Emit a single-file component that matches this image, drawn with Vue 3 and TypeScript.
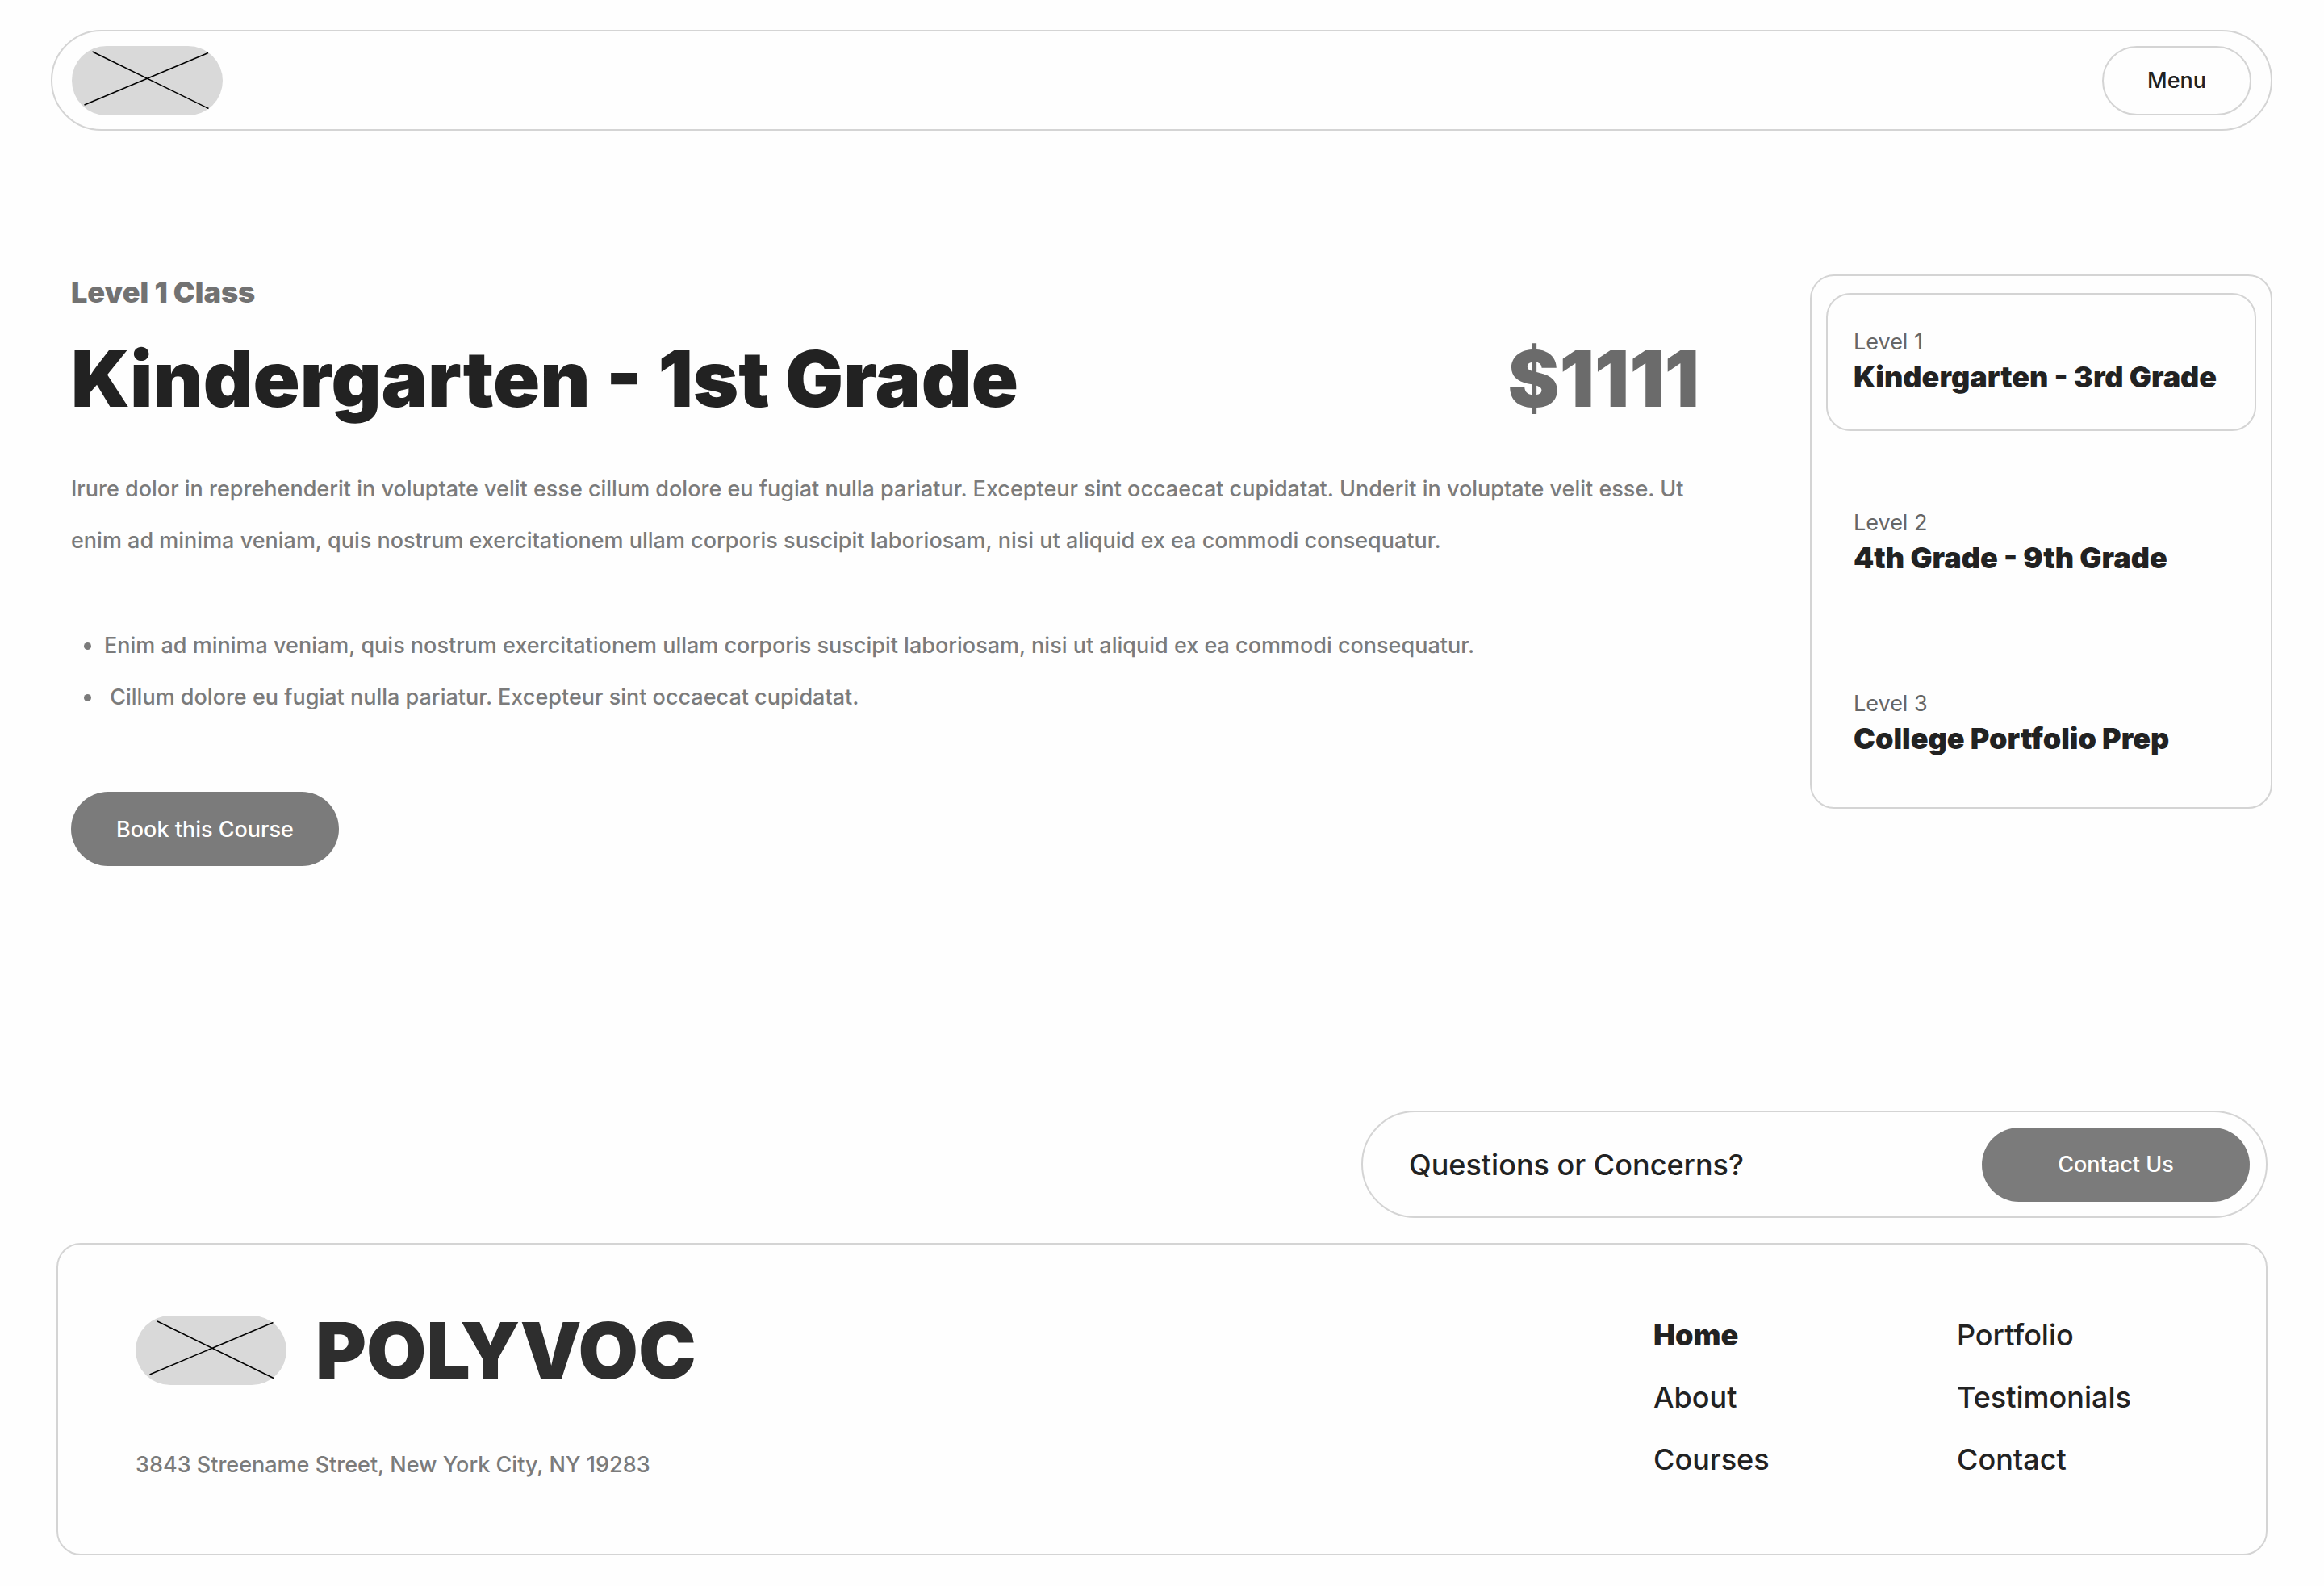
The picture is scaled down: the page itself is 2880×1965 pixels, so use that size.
<script setup lang="ts">
interface Level {
  label: string
  title: string
  active: boolean
}

interface FooterLink {
  text: string
  current: boolean
}

const levels: Level[] = [
  { label: 'Level 1', title: 'Kindergarten - 3rd Grade', active: true },
  { label: 'Level 2', title: '4th Grade - 9th Grade', active: false },
  { label: 'Level 3', title: 'College Portfolio Prep', active: false },
]

const footerColumns: FooterLink[][] = [
  [
    { text: 'Home', current: true },
    { text: 'About', current: false },
    { text: 'Courses', current: false },
  ],
  [
    { text: 'Portfolio', current: false },
    { text: 'Testimonials', current: false },
    { text: 'Contact', current: false },
  ],
]
</script>

<template>
  <div class="page">
    <header class="topbar">
      <a href="#" class="logo" aria-label="Polyvoc home">
        <svg width="187" height="86" viewBox="0 0 187 86" fill="none">
          <rect width="187" height="86" rx="43" fill="#d9d9d9" />
          <path d="M25.500 7L169.500 77.500M15.500 73L169 8.500" stroke="#000" stroke-width="1.500" />
        </svg>
      </a>
      <button type="button" class="menu">Menu</button>
    </header>

    <main class="content">
      <article class="course">
        <p class="eyebrow">Level 1 Class</p>
        <div class="title-row">
          <h1>Kindergarten - 1st Grade</h1>
          <span class="price">$1111</span>
        </div>
        <p class="body">
          Irure dolor in reprehenderit in voluptate velit esse cillum dolore eu fugiat nulla pariatur. Excepteur sint occaecat cupidatat. Underit in voluptate velit esse. Ut enim ad minima veniam, quis nostrum exercitationem ullam corporis suscipit laboriosam, nisi ut aliquid ex ea commodi consequatur.
        </p>
        <ul class="points">
          <li>Enim ad minima veniam, quis nostrum exercitationem ullam corporis suscipit laboriosam, nisi ut aliquid ex ea commodi consequatur.</li>
          <li>&nbsp;Cillum dolore eu fugiat nulla pariatur. Excepteur sint occaecat cupidatat.</li>
        </ul>
        <button type="button" class="pill">Book this Course</button>
      </article>

      <nav class="levels" aria-label="Levels">
        <a
          v-for="level in levels"
          :key="level.label"
          href="#"
          class="level"
          :class="{ active: level.active }"
        >
          <span class="level-label">{{ level.label }}</span>
          <span class="level-title">{{ level.title }}</span>
        </a>
      </nav>
    </main>

    <section class="cta">
      <h2>Questions or Concerns?</h2>
      <button type="button" class="pill">Contact Us</button>
    </section>

    <footer class="footer">
      <div class="brand">
        <div class="brand-row">
          <svg width="187" height="86" viewBox="0 0 187 86" fill="none" aria-hidden="true">
            <rect width="187" height="86" rx="43" fill="#d9d9d9" />
            <path d="M27 7L171 77.500M17.500 73L170.500 8.500" stroke="#000" stroke-width="1.500" />
          </svg>
          <span class="brand-name">POLYVOC</span>
        </div>
        <address>3843 Streename Street, New York City, NY 19283</address>
      </div>
      <nav class="links" aria-label="Footer">
        <ul v-for="(column, i) in footerColumns" :key="i">
          <li v-for="link in column" :key="link.text">
            <a href="#" :class="{ current: link.current }">{{ link.text }}</a>
          </li>
        </ul>
      </nav>
    </footer>
  </div>
</template>

<style>
body {
  background: #fefefe;
}
</style>

<style scoped>
.page {
  box-sizing: border-box;
  padding: 37px 64px 37px 63px;
  font-family: Inter, "Liberation Sans", sans-serif;
  font-size: 27px;
  font-weight: 500;
  color: #222;
}

.page *,
.page *::before {
  box-sizing: border-box;
}

h1,
h2,
p,
ul {
  margin: 0;
  padding: 0;
  list-style: none;
}

a {
  color: inherit;
  text-decoration: none;
}

button {
  font: inherit;
  cursor: pointer;
}

svg {
  display: block;
  flex: none;
}

.topbar {
  display: flex;
  align-items: center;
  justify-content: space-between;
  height: 125px;
  padding: 0 24px;
  border: 2px solid #d4d4d4;
  border-radius: 63px;
}

.menu {
  width: 185px;
  height: 86px;
  border: 2px solid #d4d4d4;
  border-radius: 43px;
  background: transparent;
  color: #222;
}

.content {
  display: grid;
  grid-template-columns: minmax(0, 1fr) 573px;
  gap: 137px;
  align-items: start;
  margin-top: 178px;
  padding-left: 25px;
}

.eyebrow {
  font-size: 36px;
  font-weight: 900;
  line-height: 44px;
  color: #727272;
}

.title-row {
  display: flex;
  justify-content: space-between;
  margin-top: 27px;
  font-size: 96px;
  font-weight: 900;
  line-height: 116px;
}

h1 {
  font: inherit;
}

.price {
  color: #6b6b6b;
  font-kerning: none;
}

.body,
.points {
  line-height: 64px;
  color: #7b7b7b;
}

.body {
  margin-top: 47px;
}

.points {
  margin-top: 66px;
}

.points li {
  display: flex;
  align-items: center;
  gap: 16px;
  padding-left: 16px;
}

.points li::before {
  content: "";
  flex: none;
  width: 9px;
  height: 9px;
  border-radius: 50%;
  background: #7b7b7b;
}

.pill {
  width: 332px;
  height: 92px;
  border: 0;
  border-radius: 46px;
  background: #7b7b7b;
  color: #fff;
}

.course .pill {
  margin-top: 85px;
}

.levels {
  display: flex;
  flex-direction: column;
  gap: 53px;
  padding: 21px 18px 18px;
  border: 2px solid #d4d4d4;
  border-radius: 30px;
}

.level {
  display: flex;
  flex-direction: column;
  gap: 4px;
  height: 171px;
  padding: 42px 32px;
  border: 2px solid transparent;
  border-radius: 30px;
}

.level.active {
  border-color: #d4d4d4;
}

.level-label {
  line-height: 34px;
  font-weight: 400;
  color: #666;
}

.level-title {
  font-size: 36px;
  font-weight: 900;
  line-height: 44px;
  white-space: nowrap;
}

.cta {
  display: flex;
  align-items: center;
  justify-content: space-between;
  width: 1123px;
  height: 133px;
  margin: 303px 6px 0 auto;
  padding: 0 20px 0 57px;
  border: 2px solid #d4d4d4;
  border-radius: 67px;
}

.cta h2 {
  font-size: 36px;
  font-weight: 500;
}

.footer {
  display: flex;
  justify-content: space-between;
  margin: 31px 6px 0 7px;
  padding: 73px 167px 93px 96px;
  border: 2px solid #d4d4d4;
  border-radius: 30px;
}

.brand-row {
  display: flex;
  align-items: center;
  gap: 36px;
}

.brand-name {
  font-size: 96px;
  font-weight: 900;
  line-height: 116px;
  color: #2e2e2e;
}

address {
  margin-top: 67px;
  font-style: normal;
  line-height: 34px;
  color: #7b7b7b;
}

.links {
  display: grid;
  grid-template-columns: 376px 216px;
  padding-top: 17px;
}

.links ul {
  display: flex;
  flex-direction: column;
  gap: 33px;
}

.links li {
  font-size: 36px;
  line-height: 44px;
}

.links .current {
  font-weight: 900;
}
</style>
